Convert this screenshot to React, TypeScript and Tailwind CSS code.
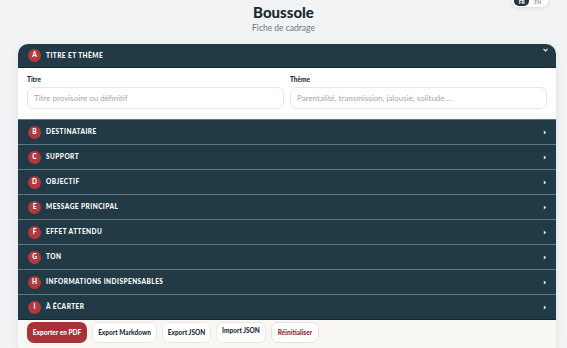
import React from "react";

const sections = [
  { letter: "B", title: "Destinataire" },
  { letter: "C", title: "Support" },
  { letter: "D", title: "Objectif" },
  { letter: "E", title: "Message principal" },
  { letter: "F", title: "Effet attendu" },
  { letter: "G", title: "Ton" },
  { letter: "H", title: "Informations indispensables" },
  { letter: "I", title: "À écarter" },
];

const Badge = ({ letter }: { letter: string }) => (
  <span className="flex h-[13px] w-[13px] items-center justify-center rounded-full bg-[#b23a3f] text-[6.5px] font-black leading-none text-white">
    {letter}
  </span>
);

const App = () => {
  return (
    <div className="relative h-[348px] w-[567px] overflow-hidden bg-[#f2f3f5] font-['Lato',sans-serif] text-[#1c2d35]">
      {/* langue */}
      <div className="absolute right-[19px] top-[-5px] flex items-center gap-[5px] rounded-full bg-white py-[1px] pl-[2px] pr-[7px] shadow-[0_1px_4px_rgba(0,0,0,0.12)]">
        <span className="flex h-[10px] w-[15px] items-end justify-center rounded-full bg-[#1f3641] pb-[1px] text-[5px] font-black leading-[6px] text-white">FR</span>
        <span className="pt-[2px] text-[5px] font-bold leading-[6px] text-[#8a9398]">EN</span>
      </div>

      <header className="flex flex-col items-center pt-[3px]">
        <h1 className="text-[15px] font-black leading-[18px] text-[#1a2a31]">Boussole</h1>
        <p className="mt-[2px] text-[8.5px] leading-[11px] text-[#6b747a]">Fiche de cadrage</p>
      </header>

      <div className="ml-[18px] mt-[10px] w-[538px] overflow-hidden rounded-[10px] bg-white shadow-[0_2px_8px_rgba(0,0,0,0.08)]">
        {/* section ouverte */}
        <div className="flex h-[24px] items-center gap-[5px] border-b border-[#132830] bg-[#213a46] pl-[10px] pr-[8px]">
          <Badge letter="A" />
          <span className="text-[6.5px] font-black uppercase tracking-[0.07em] text-white">Titre et thème</span>
          <svg className="mb-[12px] ml-auto" width="5" height="4" viewBox="0 0 5 4">
            <path d="M0.5 0.8 L2.5 3 L4.5 0.8" fill="none" stroke="#ffffff" strokeWidth="1.1" />
          </svg>
        </div>
        <div className="grid grid-cols-2 gap-[6px] px-[9px] pb-[10px] pt-[7px]">
          <label className="flex flex-col gap-[3px]">
            <span className="text-[6.5px] font-black leading-[9px]">Titre</span>
            <input
              className="h-[22px] rounded-[7px] border border-[#e4e6e8] px-[6px] text-[8px] outline-none placeholder:text-[#a4a9ad]"
              placeholder="Titre provisoire ou définitif"
            />
          </label>
          <label className="flex flex-col gap-[3px]">
            <span className="text-[6.5px] font-black leading-[9px]">Thème</span>
            <input
              className="h-[22px] rounded-[7px] border border-[#e4e6e8] px-[6px] text-[8px] outline-none placeholder:text-[#a4a9ad]"
              placeholder="Parentalité, transmission, jalousie, solitude…"
            />
          </label>
        </div>

        {sections.map((s) => (
          <div
            key={s.letter}
            className="flex h-[25px] items-center gap-[5px] border-t border-[#5b7880] bg-[#213a46] pl-[10px] pr-[9px]"
          >
            <Badge letter={s.letter} />
            <span className="text-[6.5px] font-black uppercase tracking-[0.07em] text-white">{s.title}</span>
            <svg className="ml-auto" width="4" height="5" viewBox="0 0 4 5">
              <path d="M0.8 0.5 L3.2 2.5 L0.8 4.5 Z" fill="#e8eef0" />
            </svg>
          </div>
        ))}

        <div className="flex gap-[5px] border-t border-[#132830] bg-[#f8f7f3] px-[9px] pb-[10px] pt-[2px]">
          <button className="h-[21px] w-[60px] rounded-[7px] bg-[#a83237] text-[6.5px] font-black text-white">Exporter en PDF</button>
          <button className="h-[21px] w-[65px] rounded-[7px] border border-[#ebe8e3] bg-white text-[6.5px] font-black">Export Markdown</button>
          <button className="h-[21px] w-[49px] rounded-[7px] border border-[#ebe8e3] bg-white text-[6.5px] font-black">Export JSON</button>
          <button className="h-[21px] w-[50px] rounded-[7px] border border-[#ebe8e3] bg-white pb-[4px] text-[6.5px] font-black">Import JSON</button>
          <button className="h-[21px] w-[48px] rounded-[7px] border border-[#f1dcdd] bg-white text-[6.5px] font-black text-[#8e2a2f]">Réinitialiser</button>
        </div>
      </div>
    </div>
  );
};

export default App;
